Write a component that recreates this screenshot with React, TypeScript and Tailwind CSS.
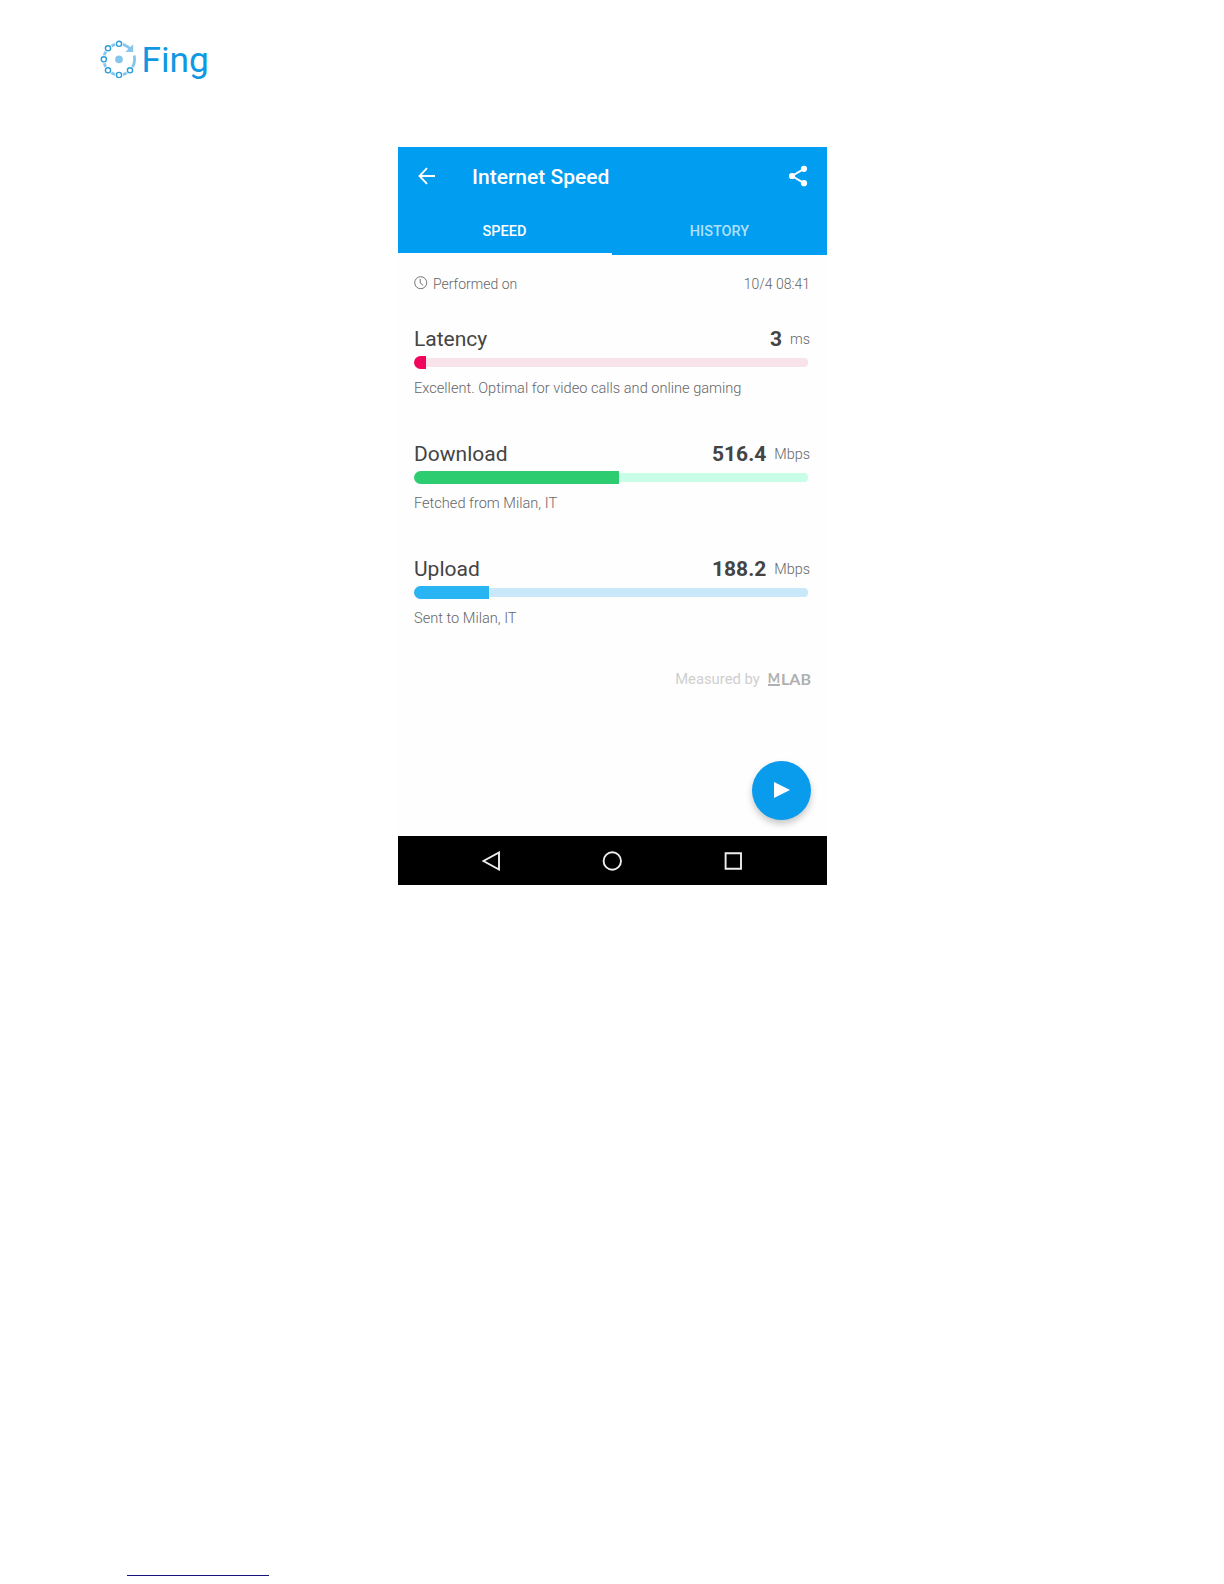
const metrics = [
    {
        label: "Latency",
        value: "3",
        unit: "ms",
        note: "Excellent. Optimal for video calls and online gaming",
        percent: 3.05,
        fill: "bg-[#f1045b]",
        track: "bg-[#f9e3eb]",
    },
    {
        label: "Download",
        value: "516.4",
        unit: "Mbps",
        note: "Fetched from Milan, IT",
        percent: 52,
        fill: "bg-[#2ecc71]",
        track: "bg-[#c8fde8]",
    },
    {
        label: "Upload",
        value: "188.2",
        unit: "Mbps",
        note: "Sent to Milan, IT",
        percent: 19,
        fill: "bg-[#29b4f4]",
        track: "bg-[#c9e8f9]",
    },
];

const nodes = [
    [19, 3.8],
    [8, 8.3],
    [3.8, 19.3],
    [8, 30.3],
    [19, 35],
    [30, 30.3],
];

const Logo = () => {
    return (
        <div className="flex h-10 items-center text-[#0f98e2]">
            <svg width="38" height="38" viewBox="0 0 38 38" fill="none" className="-mt-0.5">
                <path
                    d="M34.2 15.5A16 16 0 0 1 19 35A15.7 15.7 0 0 1 3.8 19.3A15.6 15.6 0 0 1 19 3.8Q25 3.9 30 8.5"
                    stroke="#86c5ec"
                    strokeWidth="2.8"
                />
                <path d="M33.2 4.2V12H25.3Z" fill="#86c5ec" />
                <circle cx="19" cy="19.4" r="3.8" fill="#86c5ec" />
                {nodes.map(([cx, cy]) => (
                    <g key={`${cx}-${cy}`}>
                        <circle cx={cx} cy={cy} r="4.1" fill="#fff" />
                        <circle cx={cx} cy={cy} r="2.6" fill="#fff" stroke="#2a9ddb" strokeWidth="1.4" />
                    </g>
                ))}
            </svg>
            <span className="ml-[3.5px] text-[35.3px] leading-10">Fing</span>
        </div>
    );
};

const Header = () => {
    return (
        <header className="h-[108px] bg-[#009df1] text-white">
            <div className="flex h-[57px] items-center pr-[17px] pl-[17px]">
                <svg width="24" height="24" viewBox="0 0 24 24" fill="none" stroke="currentColor" strokeWidth="1.9">
                    <path d="M20 12H5M12 4.2L4.5 12L12 19.8" />
                </svg>
                <h1 className="ml-[33px] flex-1 pt-1 text-[21px] font-medium">Internet Speed</h1>
                <svg width="24" height="24" viewBox="0 0 24 24" fill="currentColor">
                    <path d="M18 4.8L6 12L18 19.2" fill="none" stroke="currentColor" strokeWidth="2" />
                    <circle cx="18" cy="4.8" r="3.1" />
                    <circle cx="6" cy="12" r="3.1" />
                    <circle cx="18" cy="19.2" r="3.1" />
                </svg>
            </div>
            <div className="flex h-[51px] text-center text-[14.5px] font-medium">
                <div className="w-[214px] border-b-2 border-white pt-[17px] pr-px">SPEED</div>
                <div className="flex-1 pt-[17px] text-white/70">HISTORY</div>
            </div>
        </header>
    );
};

const Metric = ({ label, value, unit, note, percent, fill, track }: (typeof metrics)[number]) => {
    return (
        <section className="h-[115px]">
            <div className="flex h-7 items-center text-[#444]">
                <h2 className="flex-1 text-[21px] leading-7">{label}</h2>
                <span className="text-[21px] leading-7 font-bold">{value}</span>
                <span className="ml-2 pt-0.5 text-[14.4px] leading-7 font-light text-[#666]">{unit}</span>
            </div>
            <div className="mt-[3px] mr-0.5 flex h-[13px] items-center">
                <div className={`h-[13px] rounded-l-full ${fill}`} style={{ width: `${percent}%` }} />
                <div className={`h-[9px] flex-1 rounded-r-[4px] ${track}`} />
            </div>
            <p className="mt-[9px] text-[14.6px] leading-5 font-light text-[#666]">{note}</p>
        </section>
    );
};

const App = () => {
    return (
        <div className="flex h-[1584px] w-[1224px] flex-col bg-white font-[Roboto,sans-serif]">
            <div className="pt-10 pl-[100px]">
                <Logo />
            </div>

            <main className="mt-[67px] ml-[398px] flex h-[738px] w-[429px] flex-col bg-[#fefefe]">
                <Header />
                <div className="flex flex-1 flex-col pr-[17px] pl-4">
                    <div className="mt-[18px] flex h-5 items-center text-[14px] font-light text-[#666]">
                        <svg width="14" height="14" viewBox="0 0 14 14" fill="none" stroke="currentColor" strokeWidth="0.9">
                            <circle cx="6.7" cy="6.7" r="6" />
                            <path d="M6.2 3V7L9.2 9.3" />
                        </svg>
                        <span className="ml-[5px] flex-1 pt-[3px]">Performed on</span>
                        <span className="pt-[3px]">10/4 08:41</span>
                    </div>
                    <div className="mt-8">
                        {metrics.map((metric) => (
                            <Metric key={metric.label} {...metric} />
                        ))}
                    </div>
                    <div className="-mt-px flex h-5 items-center justify-end text-[14.8px] text-[#cfcfcf]">
                        <span>Measured by</span>
                        <span className="-mr-px ml-2 flex font-[Lato,sans-serif] text-[16px] leading-none font-bold text-[#b0b0b0]">
                            <span className="h-[13px] border-b-2 border-[#b0b0b0] text-[13px] leading-[10px]">M</span>
                            <span className="ml-px leading-[11px]">LAB</span>
                        </span>
                    </div>
                    <button className="mt-[72px] -mr-px flex size-[59px] items-center justify-center self-end rounded-full bg-[#099cec] shadow-[0_4px_7px_rgba(0,0,0,0.22)]">
                        <svg width="16" height="16" viewBox="0 0 16 16" fill="#fff" className="-mt-px">
                            <path d="M0 0L16 8L0 16Z" />
                        </svg>
                    </button>
                </div>
                <nav className="flex h-[49px] items-center justify-center gap-[101px] bg-black pt-px pr-px">
                    <svg width="20" height="20" viewBox="0 0 20 20" fill="none" stroke="#eee" strokeWidth="1.9">
                        <path d="M18 1.5V18.5L2.5 10Z" />
                    </svg>
                    <svg width="20" height="20" viewBox="0 0 20 20" fill="none" stroke="#eee" strokeWidth="1.9">
                        <circle cx="10.3" cy="10" r="8.7" />
                    </svg>
                    <svg width="20" height="20" viewBox="0 0 20 20" fill="none" stroke="#eee" strokeWidth="1.9">
                        <path d="M2.6 2.3H18V17.7H2.6Z" />
                    </svg>
                </nav>
            </main>

            <div className="mt-auto mb-2 ml-[127px] h-px w-[142px] bg-[#15157c]" />
        </div>
    );
};

export default App;
